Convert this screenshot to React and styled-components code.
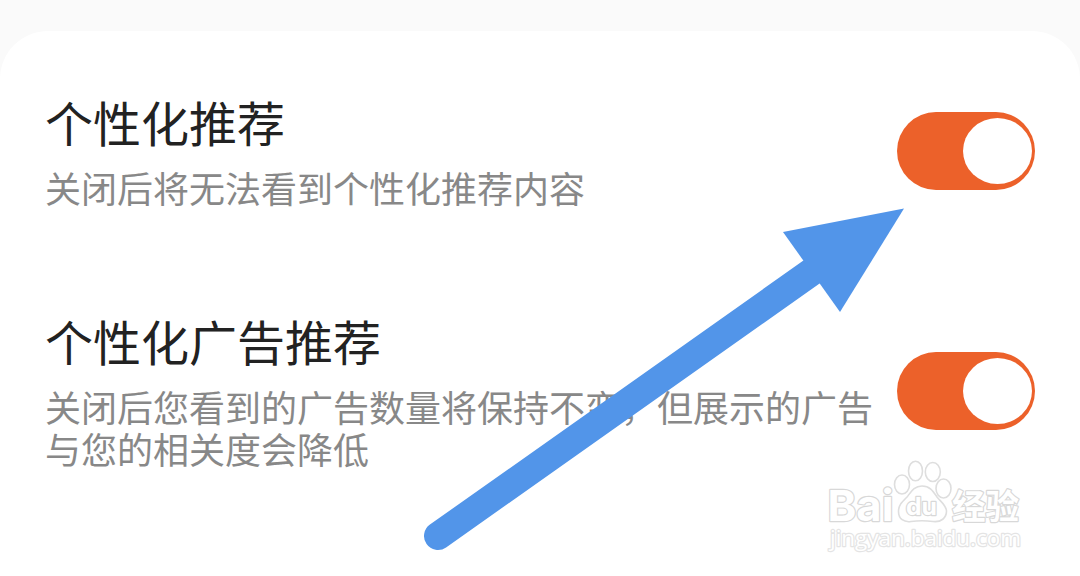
import React from "react";
import styled, { createGlobalStyle } from "styled-components";

const settings = [
  {
    title: "个性化推荐",
    lines: ["关闭后将无法看到个性化推荐内容"],
  },
  {
    title: "个性化广告推荐",
    lines: ["关闭后您看到的广告数量将保持不变，但展示的广告", "与您的相关度会降低"],
  },
];

function Switch() {
  return (
    <Track role="switch" aria-checked="true">
      <Knob />
    </Track>
  );
}

function SettingRow({ title, lines }) {
  return (
    <Row>
      <Copy>
        <Title>{title}</Title>
        {lines.map((line) => (
          <Description key={line}>{line}</Description>
        ))}
      </Copy>
      <Switch />
    </Row>
  );
}

function Arrow() {
  return (
    <ArrowLayer viewBox="0 0 1080 576">
      <path d="M438 536 L820 266" stroke="#5295e9" strokeWidth="28" strokeLinecap="round" />
      <path d="M904 208.500 L783 232 L840 312 Z" fill="#5295e9" />
    </ArrowLayer>
  );
}

function Mark({ size, light, children, ...rest }) {
  return (
    <MarkText $size={size} $light={light} lengthAdjust="spacingAndGlyphs" {...rest}>
      {children}
    </MarkText>
  );
}

function Watermark() {
  return (
    <WatermarkLayer viewBox="0 0 210 100">
      <g fill="#fff" stroke="#dedede" strokeWidth="1.600" strokeLinejoin="round">
        <ellipse cx="82" cy="34.500" rx="7.500" ry="9.500" />
        <ellipse cx="95.500" cy="21" rx="7" ry="9.800" />
        <ellipse cx="112.800" cy="22" rx="7.500" ry="9.500" />
        <ellipse cx="123.500" cy="38.500" rx="7.500" ry="9.500" />
        <path d="M102 36 C94 36 91 42 87 47 C82 52 78.500 55 78.500 61.500 C78.500 69 84 72.500 91 71.500 C98 70.500 106 70.500 113 71.500 C121 72.500 126.500 68 126.500 61 C126 55 121 52 117 47 C113 41 110 36 102 36 Z" />
      </g>
      <Mark x="7.500" y="70.500" size={43} textLength="66">Bai</Mark>
      <Mark x="86" y="65" size={24} textLength="31">du</Mark>
      <Mark x="132" y="68.500" size={34} textLength="67">经验</Mark>
      <Mark x="10" y="96" size={22} textLength="191" light>jingyan.baidu.com</Mark>
    </WatermarkLayer>
  );
}

function App() {
  return (
    <Page>
      <GlobalStyle />
      <Card>
        {settings.map((item) => (
          <SettingRow key={item.title} {...item} />
        ))}
      </Card>
      <Arrow />
      <Watermark />
    </Page>
  );
}

export default App;

const GlobalStyle = createGlobalStyle`
  * {
    box-sizing: border-box;
  }

  body {
    margin: 0;
    background: #fafafa;
  }
`;

const Page = styled.div`
  position: relative;
  width: 1080px;
  height: 576px;
  padding-top: 31px;
  overflow: hidden;
  background: #fafafa;
  font-family: "Noto Sans CJK SC", sans-serif;
`;

const Card = styled.main`
  display: flex;
  flex-direction: column;
  gap: 105px;
  height: 545px;
  padding: 62px 45px 0;
  border-radius: 48px 48px 0 0;
  background: #fff;
`;

const Row = styled.section`
  display: flex;
  align-items: center;
  justify-content: space-between;
`;

const Copy = styled.div`
  white-space: nowrap;
`;

const Title = styled.h2`
  margin: 0 0 17px;
  color: #222;
  font-size: 48px;
  font-weight: 400;
  line-height: 56px;
`;

const Description = styled.p`
  margin: 0;
  color: #888;
  font-size: 36px;
  line-height: 42px;

  &:last-child {
    margin-bottom: -1px;
  }
`;

const Track = styled.div`
  display: flex;
  align-items: center;
  justify-content: flex-end;
  flex-shrink: 0;
  width: 138px;
  height: 78px;
  margin-top: 2px;
  padding-right: 3px;
  border-radius: 39px;
  background: #ec612a;
`;

const Knob = styled.span`
  width: 69px;
  height: 66px;
  border-radius: 50%;
  background: #fff;
`;

const ArrowLayer = styled.svg`
  position: absolute;
  top: 0;
  left: 0;
  width: 1080px;
  height: 576px;
  fill: none;
  pointer-events: none;
`;

const WatermarkLayer = styled.svg`
  position: absolute;
  top: 450px;
  left: 820px;
  width: 210px;
  height: 100px;
  overflow: visible;
  pointer-events: none;
`;

const MarkText = styled.text`
  fill: #fff;
  stroke: ${(props) => (props.$light ? "#e4e4e4" : "#d8d8d8")};
  stroke-width: ${(props) => (props.$light ? "2.4px" : "2.4px")};
  stroke-linejoin: round;
  paint-order: stroke;
  font-family: ${(props) => (props.$light ? '"Open Sans"' : "Inter")}, "Noto Sans CJK SC", sans-serif;
  font-size: ${(props) => props.$size}px;
  font-weight: ${(props) => (props.$light ? 400 : 700)};
`;
